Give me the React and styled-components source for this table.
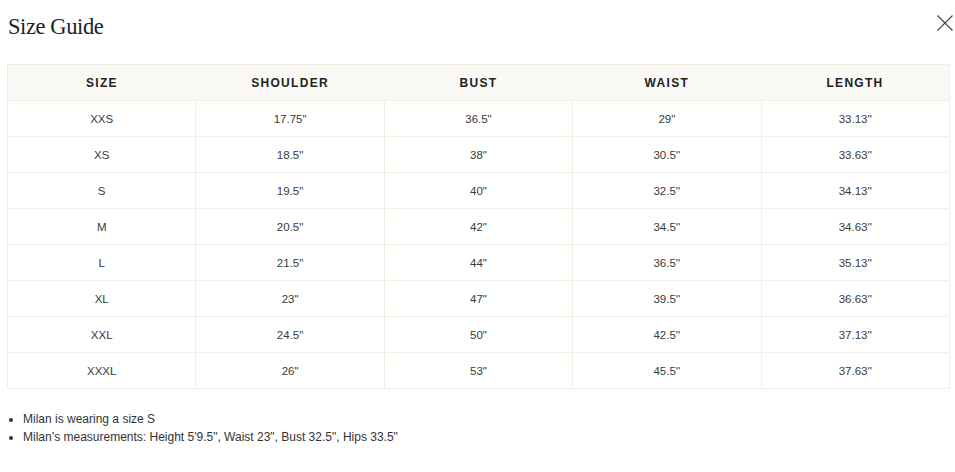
import styled, { createGlobalStyle } from "styled-components";

const GlobalStyle = createGlobalStyle`
  body {
    margin: 0;
    background: #fff;
    font-family: "Liberation Sans", Arial, sans-serif;
  }
`;

const Page = styled.div`
  width: 955px;
  height: 472px;
  box-sizing: border-box;
  padding: 0 5px 0 7px;
`;

const Header = styled.div`
  display: flex;
  align-items: center;
  justify-content: space-between;
  height: 54px;
  padding-left: 1px;
  margin-bottom: 10px;
`;

const Title = styled.h2`
  margin: 0;
  font-family: "Liberation Serif", "Times New Roman", serif;
  font-weight: 400;
  font-size: 22.5px;
  color: #222;
  letter-spacing: -0.4px;
`;

const CloseButton = styled.button`
  border: 0;
  background: none;
  padding: 0;
  width: 17px;
  height: 17px;
  display: flex;
  align-items: center;
  justify-content: center;
  cursor: pointer;
  margin-top: -8px;
  margin-right: -3px;
`;

const Table = styled.table`
  width: 100%;
  border-collapse: collapse;
  table-layout: fixed;
  border: 1px solid #f1eee2;
`;

const HeadCell = styled.th`
  height: 35px;
  padding: 0;
  background: #faf9f5;
  font-size: 12px;
  font-weight: 700;
  letter-spacing: 1.3px;
  color: #222;
  text-align: center;
`;

const Cell = styled.td`
  height: 35px;
  padding: 0;
  border: 1px solid #f1eee2;
  font-size: 11.5px;
  color: #3a3a3a;
  text-align: center;
`;

const Notes = styled.ul`
  margin: 21px 0 0;
  padding-left: 16px;
  font-size: 12px;
  color: #333;
  line-height: 18px;
`;

const columns = ["SIZE", "SHOULDER", "BUST", "WAIST", "LENGTH"];

const rows = [
  ["XXS", "17.75\"", "36.5\"", "29\"", "33.13''"],
  ["XS", "18.5\"", "38\"", "30.5''", "33.63''"],
  ["S", "19.5\"", "40\"", "32.5''", "34.13''"],
  ["M", "20.5\"", "42\"", "34.5''", "34.63''"],
  ["L", "21.5\"", "44\"", "36.5''", "35.13''"],
  ["XL", "23\"", "47\"", "39.5''", "36.63''"],
  ["XXL", "24.5\"", "50\"", "42.5''", "37.13''"],
  ["XXXL", "26\"", "53\"", "45.5''", "37.63''"],
];

export default function App() {
  return (
    <>
      <GlobalStyle />
      <Page>
        <Header>
          <Title>Size Guide</Title>
          <CloseButton aria-label="Close">
            <svg width="16" height="16" viewBox="0 0 16 16">
              <path d="M0.5 0.5L15.5 15.5M15.5 0.5L0.5 15.5" stroke="#444" strokeWidth="1.1" fill="none" />
            </svg>
          </CloseButton>
        </Header>
        <Table>
          <thead>
            <tr>
              {columns.map((c) => (
                <HeadCell key={c}>{c}</HeadCell>
              ))}
            </tr>
          </thead>
          <tbody>
            {rows.map((r) => (
              <tr key={r[0]}>
                {r.map((v, i) => (
                  <Cell key={i}>{v}</Cell>
                ))}
              </tr>
            ))}
          </tbody>
        </Table>
        <Notes>
          <li>Milan is wearing a size S</li>
          <li>Milan’s measurements: Height 5'9.5", Waist 23", Bust 32.5", Hips 33.5"</li>
        </Notes>
      </Page>
    </>
  );
}
